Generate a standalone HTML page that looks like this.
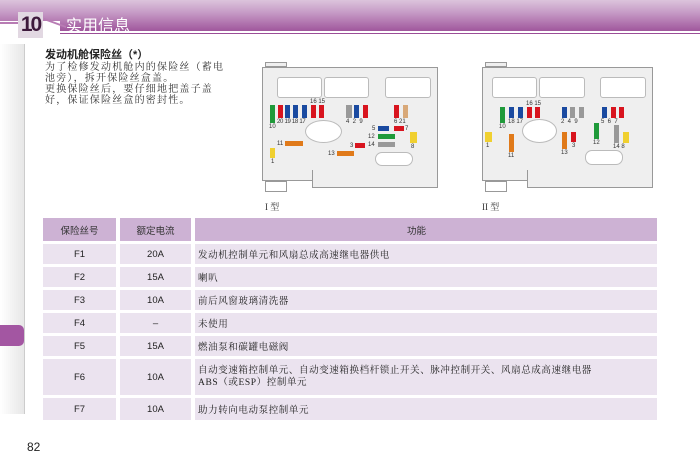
<!DOCTYPE html>
<html><head><meta charset="utf-8"><style>
*{margin:0;padding:0;box-sizing:border-box}
body{width:700px;height:468px;background:#fff;position:relative;overflow:hidden;font-family:"Liberation Sans","Noto Sans CJK SC",sans-serif}
.a{position:absolute}
.hdr{left:0;top:0;width:700px;height:34px;background:linear-gradient(#dcc4dc 0%,#c79dc7 35%,#9a4c96 100%)}
.f{position:absolute}
.lb{position:absolute;font-size:6px;color:#333;line-height:6px;white-space:nowrap}
.box{position:absolute;background:#efefef;border:1px solid #999}
.win{position:absolute;background:#fff;border:1px solid #bbb;border-radius:3px}
.ov{position:absolute;background:#fff;border:1px solid #bbb;border-radius:50%}
.R{background:#d8141e}.B{background:#1a4aa0}.G{background:#1f9a3a}.Y{background:#f0d030}.O{background:#e07a1a}.S{background:#999}.T{background:#d8a878}
table{position:absolute;left:39px;top:215px;width:622px;border-collapse:separate;border-spacing:4px 3px}
td{background:#ebe3ef;font-size:9.5px;color:#222;height:20px;font-family:"Liberation Serif","Noto Serif CJK SC",serif;padding:0 0 0 3px;letter-spacing:.6px}
td.c{text-align:center;font-family:"Liberation Sans","Noto Sans CJK SC",sans-serif;padding:0;letter-spacing:0}
th{background:#cdb2d4;font-size:9.5px;color:#333;height:23px;font-weight:normal}
</style></head><body>
<div class="a hdr"></div>
<div class="a" style="left:0;top:21px;width:60px;height:13px;background:#fff"></div>
<div class="a" style="left:0;top:22px;width:18px;height:2px;background:#b87cb4"></div>
<div class="a" style="left:44px;top:22px;width:22px;height:2px;background:#b87cb4;transform:skewY(20deg)"></div>
<div class="a" style="left:60px;top:31px;width:640px;height:2px;background:#fff"></div>
<div class="a" style="left:18px;top:12px;width:25px;height:26px;background:#e2d8e2;font:bold 21px 'Liberation Sans',sans-serif;color:#3e1a3c;letter-spacing:-2px;line-height:26px;text-align:center">10</div>
<div class="a" style="left:66px;top:12px;font-size:16px;color:#fff">实用信息</div>
<div class="a" style="left:0;top:44px;width:25px;height:370px;background:linear-gradient(90deg,#fff,#e6e6e6)"></div>
<div class="a" style="left:24px;top:44px;width:1px;height:370px;background:#ccc"></div>
<div class="a" style="left:0;top:325px;width:24px;height:21px;background:#a356a2;border-radius:0 5px 5px 0"></div>
<div class="a" style="left:45px;top:46px;font-size:11px;font-weight:bold;color:#222">发动机舱保险丝（*）</div>
<div class="a" style="left:45px;top:62px;font-size:10px;line-height:11px;color:#333;font-family:'Liberation Serif','Noto Serif CJK SC',serif;width:185px;letter-spacing:1.2px">为了检修发动机舱内的保险丝（蓄电池旁），拆开保险丝盒盖。<br>更换保险丝后，要仔细地把盖子盖好，保证保险丝盒的密封性。</div>

<!-- Box I -->
<div class="box" style="left:262px;top:67px;width:176px;height:114px"></div>
<div class="box" style="left:312px;top:170px;width:126px;height:18px;border-top:none"></div>
<div class="a" style="left:263px;top:168px;width:48px;height:12px;background:#efefef"></div>
<div class="box" style="left:265px;top:62px;width:22px;height:5px"></div>
<div class="box" style="left:265px;top:181px;width:22px;height:11px;background:#fff"></div>
<div class="win" style="left:277px;top:77px;width:45px;height:21px"></div>
<div class="win" style="left:324px;top:77px;width:45px;height:21px"></div>
<div class="win" style="left:385px;top:77px;width:46px;height:21px"></div>
<div class="ov" style="left:305px;top:120px;width:37px;height:23px"></div>
<div class="win" style="left:375px;top:152px;width:38px;height:14px;border-radius:7px"></div>
<div class="f G" style="left:270px;top:105px;width:5px;height:18px"></div>
<div class="f R" style="left:278px;top:105px;width:5px;height:13px"></div>
<div class="f B" style="left:285px;top:105px;width:5px;height:13px"></div>
<div class="f B" style="left:293px;top:105px;width:5px;height:13px"></div>
<div class="f B" style="left:302px;top:105px;width:5px;height:13px"></div>
<div class="f R" style="left:311px;top:105px;width:5px;height:13px"></div>
<div class="f R" style="left:319px;top:105px;width:5px;height:13px"></div>
<div class="f S" style="left:346px;top:105px;width:6px;height:13px"></div>
<div class="f B" style="left:354px;top:105px;width:5px;height:13px"></div>
<div class="f R" style="left:363px;top:105px;width:5px;height:13px"></div>
<div class="f R" style="left:394px;top:105px;width:5px;height:13px"></div>
<div class="f T" style="left:403px;top:105px;width:5px;height:13px"></div>
<div class="f B" style="left:378px;top:126px;width:11px;height:5px"></div>
<div class="f R" style="left:394px;top:126px;width:10px;height:5px"></div>
<div class="f G" style="left:378px;top:134px;width:17px;height:5px"></div>
<div class="f S" style="left:378px;top:142px;width:17px;height:5px"></div>
<div class="f Y" style="left:410px;top:132px;width:7px;height:11px"></div>
<div class="f O" style="left:285px;top:141px;width:18px;height:5px"></div>
<div class="f R" style="left:355px;top:143px;width:10px;height:5px"></div>
<div class="f O" style="left:337px;top:151px;width:17px;height:5px"></div>
<div class="f Y" style="left:270px;top:148px;width:5px;height:10px"></div>
<div class="lb" style="left:269px;top:124px">10</div>
<div class="lb" style="left:277px;top:119px;letter-spacing:-.3px">20 19 18 17</div>
<div class="lb" style="left:310px;top:99px">16 15</div>
<div class="lb" style="left:346px;top:119px">4 &nbsp;2 &nbsp;9</div>
<div class="lb" style="left:394px;top:119px">6 21</div>
<div class="lb" style="left:372px;top:126px">5</div>
<div class="lb" style="left:405px;top:126px">7</div>
<div class="lb" style="left:368px;top:134px">12</div>
<div class="lb" style="left:368px;top:142px">14</div>
<div class="lb" style="left:411px;top:144px">8</div>
<div class="lb" style="left:277px;top:141px">11</div>
<div class="lb" style="left:350px;top:143px">3</div>
<div class="lb" style="left:328px;top:151px">13</div>
<div class="lb" style="left:271px;top:159px">1</div>
<div class="a" style="left:265px;top:200px;font-size:9px;font-family:'Liberation Serif','Noto Serif CJK SC',serif;color:#333">I 型</div>

<!-- Box II -->
<div class="box" style="left:482px;top:67px;width:171px;height:114px"></div>
<div class="box" style="left:527px;top:170px;width:126px;height:18px;border-top:none"></div>
<div class="a" style="left:483px;top:168px;width:43px;height:12px;background:#efefef"></div>
<div class="box" style="left:485px;top:62px;width:22px;height:5px"></div>
<div class="box" style="left:485px;top:181px;width:22px;height:11px;background:#fff"></div>
<div class="win" style="left:492px;top:77px;width:45px;height:21px"></div>
<div class="win" style="left:539px;top:77px;width:46px;height:21px"></div>
<div class="win" style="left:600px;top:77px;width:46px;height:21px"></div>
<div class="ov" style="left:522px;top:119px;width:35px;height:24px"></div>
<div class="win" style="left:585px;top:150px;width:38px;height:15px;border-radius:7px"></div>
<div class="f G" style="left:500px;top:107px;width:5px;height:16px"></div>
<div class="f B" style="left:509px;top:107px;width:5px;height:11px"></div>
<div class="f B" style="left:518px;top:107px;width:5px;height:11px"></div>
<div class="f R" style="left:527px;top:107px;width:5px;height:11px"></div>
<div class="f R" style="left:535px;top:107px;width:5px;height:11px"></div>
<div class="f B" style="left:562px;top:107px;width:5px;height:11px"></div>
<div class="f S" style="left:570px;top:107px;width:5px;height:11px"></div>
<div class="f S" style="left:579px;top:107px;width:5px;height:11px"></div>
<div class="f B" style="left:602px;top:107px;width:5px;height:11px"></div>
<div class="f R" style="left:611px;top:107px;width:5px;height:11px"></div>
<div class="f R" style="left:619px;top:107px;width:5px;height:11px"></div>
<div class="f Y" style="left:485px;top:132px;width:7px;height:10px"></div>
<div class="f O" style="left:509px;top:134px;width:5px;height:18px"></div>
<div class="f O" style="left:562px;top:132px;width:5px;height:17px"></div>
<div class="f R" style="left:571px;top:132px;width:5px;height:10px"></div>
<div class="f G" style="left:594px;top:123px;width:5px;height:16px"></div>
<div class="f S" style="left:614px;top:125px;width:5px;height:18px"></div>
<div class="f Y" style="left:623px;top:132px;width:6px;height:11px"></div>
<div class="lb" style="left:499px;top:124px">10</div>
<div class="lb" style="left:508px;top:119px">18 17</div>
<div class="lb" style="left:526px;top:101px">16 15</div>
<div class="lb" style="left:561px;top:119px">2 &nbsp;4 &nbsp;9</div>
<div class="lb" style="left:601px;top:119px">5 &nbsp;6 &nbsp;7</div>
<div class="lb" style="left:486px;top:143px">1</div>
<div class="lb" style="left:508px;top:153px">11</div>
<div class="lb" style="left:561px;top:150px">13</div>
<div class="lb" style="left:572px;top:143px">3</div>
<div class="lb" style="left:593px;top:140px">12</div>
<div class="lb" style="left:613px;top:144px">14 8</div>
<div class="a" style="left:482px;top:200px;font-size:9px;font-family:'Liberation Serif','Noto Serif CJK SC',serif;color:#333">II 型</div>

<table>
<tr><th style="width:73px">保险丝号</th><th style="width:71px">额定电流</th><th style="text-align:left;padding-left:212px">功能</th></tr>
<tr><td class="c">F1</td><td class="c">20A</td><td>发动机控制单元和风扇总成高速继电器供电</td></tr>
<tr><td class="c">F2</td><td class="c">15A</td><td>喇叭</td></tr>
<tr><td class="c">F3</td><td class="c">10A</td><td>前后风窗玻璃清洗器</td></tr>
<tr><td class="c">F4</td><td class="c">–</td><td>未使用</td></tr>
<tr><td class="c">F5</td><td class="c">15A</td><td>燃油泵和碳罐电磁阀</td></tr>
<tr><td class="c" style="height:36px">F6</td><td class="c">10A</td><td style="line-height:12px">自动变速箱控制单元、自动变速箱换档杆锁止开关、脉冲控制开关、风扇总成高速继电器<br>ABS（或ESP）控制单元</td></tr>
<tr><td class="c" style="height:22px">F7</td><td class="c">10A</td><td>助力转向电动泵控制单元</td></tr>
</table>
<div class="a" style="left:27px;top:440px;font-size:12px;color:#222">82</div>
</body></html>
